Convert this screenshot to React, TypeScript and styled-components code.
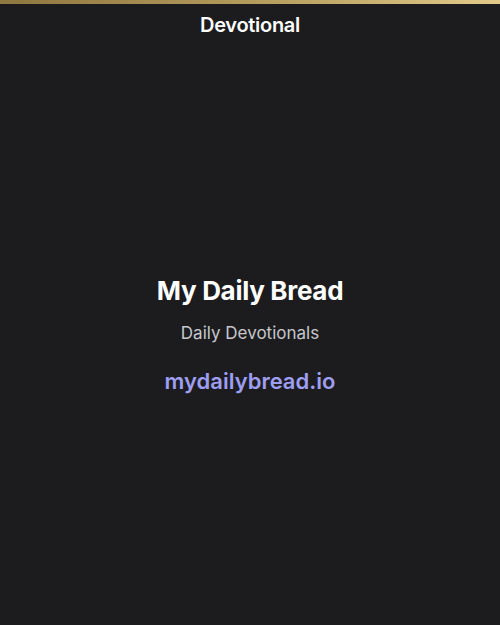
import React from 'react';
import styled, { createGlobalStyle } from 'styled-components';

const GlobalStyle = createGlobalStyle`
  html, body, #root {
    margin: 0;
    height: 100%;
  }
  body {
    background-color: #1c1c1e;
    font-family: Inter, "Noto Sans", sans-serif;
    -webkit-font-smoothing: antialiased;
  }
`;

const Page = styled.div`
  display: flex;
  flex-direction: column;
  height: 100%;
  background-color: #1c1c1e;
`;

const AccentBar = styled.div`
  height: 4px;
  background: linear-gradient(90deg, #8e7740 0%, #b49a5c 50%, #e2ca8c 100%);
`;

const Header = styled.header`
  display: flex;
  justify-content: center;
  align-items: center;
  height: 42px;
`;

const HeaderTitle = styled.h1`
  margin: 0;
  font-size: 20px;
  line-height: 24px;
  font-weight: 600;
  color: #ffffff;
  letter-spacing: -0.3px;
`;

const Content = styled.main`
  flex: 1;
  display: flex;
  flex-direction: column;
  align-items: center;
  justify-content: center;
  padding-bottom: 2px;
`;

const AppName = styled.h2`
  margin: 0;
  font-size: 26px;
  line-height: 31px;
  font-weight: 700;
  color: #ffffff;
  letter-spacing: -0.3px;
`;

const Tagline = styled.p`
  margin: 17px 0 0;
  font-size: 17px;
  line-height: 21px;
  font-weight: 400;
  color: #c7c7cc;
`;

const SiteLink = styled.a`
  margin-top: 24px;
  font-size: 22px;
  line-height: 27px;
  font-weight: 600;
  color: #9e9ef2;
  text-decoration: none;
`;

export default function App() {
  return (
    <>
      <GlobalStyle />
      <Page>
        <AccentBar />
        <Header>
          <HeaderTitle>Devotional</HeaderTitle>
        </Header>
        <Content>
          <AppName>My Daily Bread</AppName>
          <Tagline>Daily Devotionals</Tagline>
          <SiteLink href="#">mydailybread.io</SiteLink>
        </Content>
      </Page>
    </>
  );
}
